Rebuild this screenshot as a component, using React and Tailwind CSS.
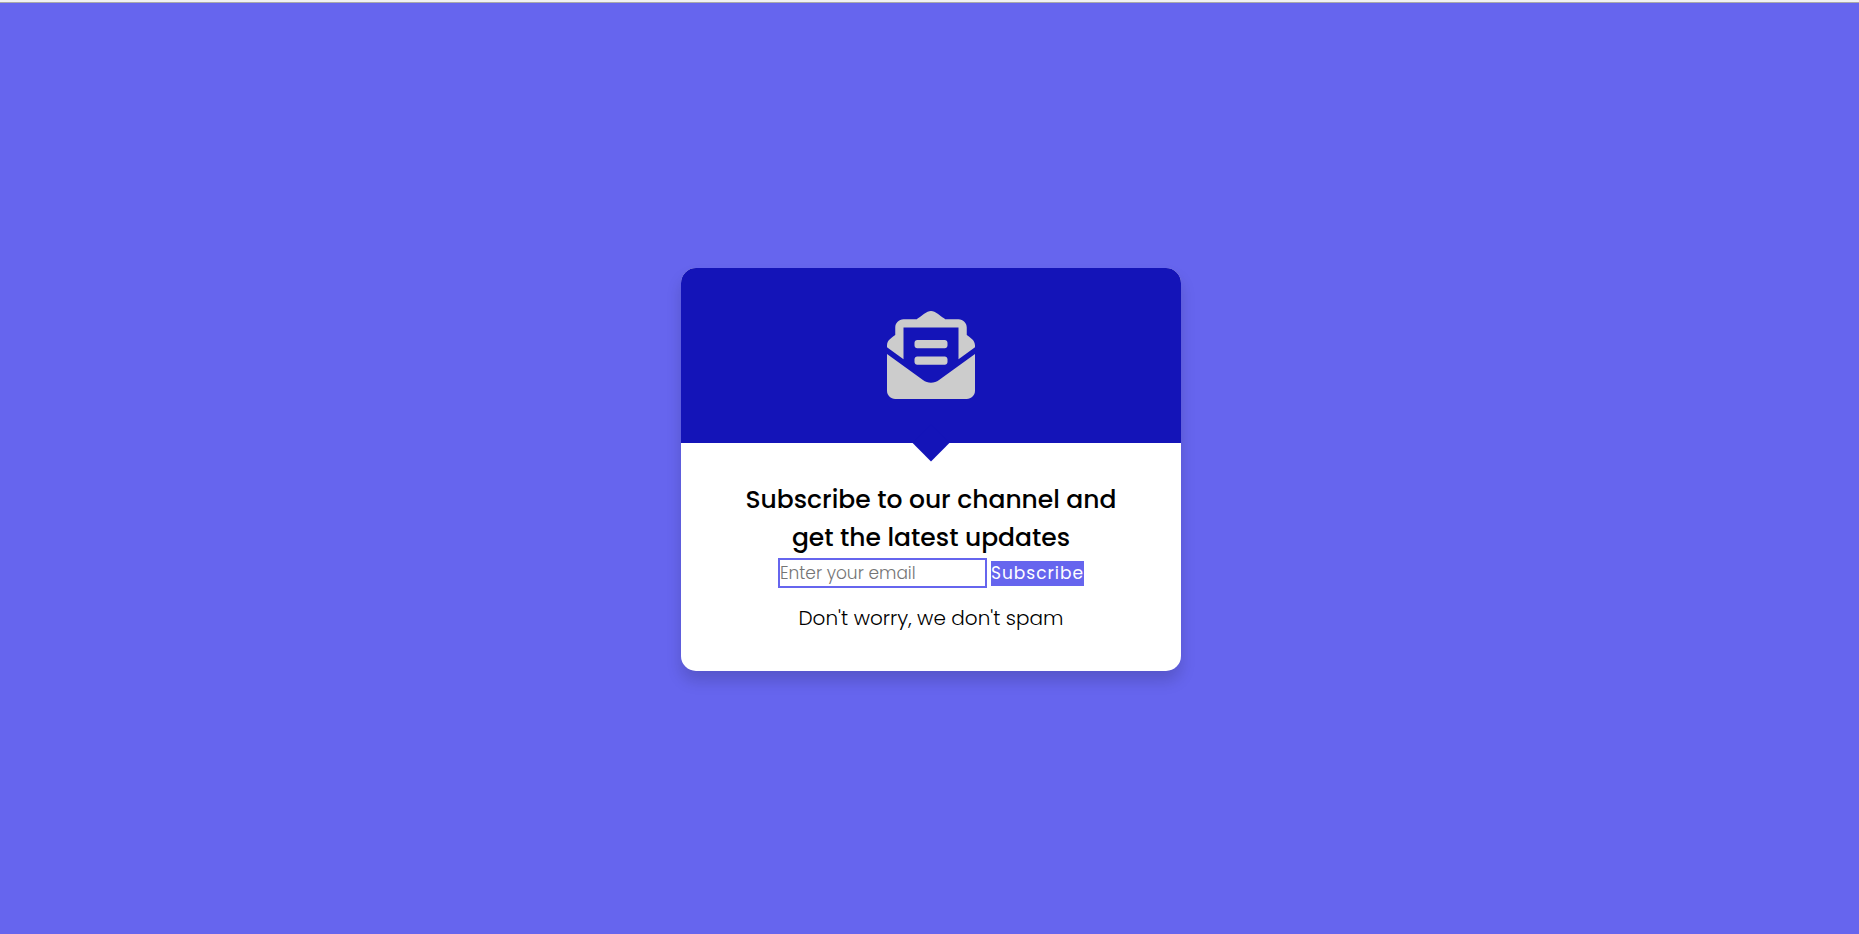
import { FaEnvelopeOpenText } from "react-icons/fa";

export default function App() {
  return (
    <div className="flex min-h-screen flex-col bg-[#6665ee] font-['Poppins','Inter',sans-serif] text-black">
      <div className="h-[3px] border-b border-[#a9a9a9] bg-[#f1f1f1]" />
      <main className="flex grow items-center justify-center py-4 pr-4 pl-[19px]">
        <section className="mt-[2px] w-full max-w-[500px] overflow-hidden rounded-[15px] bg-white shadow-[0_10px_15px_rgba(0,0,0,0.15)]">
          <header className="relative flex h-[175px] items-center justify-center bg-[#1414b8] pb-[2px]">
            <FaEnvelopeOpenText className="size-[88px] text-[#cccccc]" aria-hidden="true" />
            <span className="absolute -bottom-[13px] left-1/2 size-[26px] -translate-x-1/2 rotate-45 bg-[#1414b8]" />
          </header>
          <form
            className="flex flex-col items-center px-[60px] pt-[38px] pb-[36px] text-center"
            onSubmit={(event) => event.preventDefault()}
          >
            <h1 className="text-[25px] leading-[38px] font-medium">
              Subscribe to our channel and get the latest updates
            </h1>
            <div className="mt-px flex flex-wrap items-center justify-center gap-1">
              <input
                type="email"
                aria-label="Email"
                placeholder="Enter your email"
                className="h-[30px] w-[209px] border-2 border-[#6665ee] text-[17px] font-light outline-none placeholder:text-[#757575]"
              />
              <button type="submit" className="h-[25px] bg-[#6665ee] text-[17px] leading-[25px] tracking-[1px] text-white">
                Subscribe
              </button>
            </div>
            <p className="mt-[14px] text-[20px] leading-[33px] font-light">Don't worry, we don't spam</p>
          </form>
        </section>
      </main>
    </div>
  );
}
